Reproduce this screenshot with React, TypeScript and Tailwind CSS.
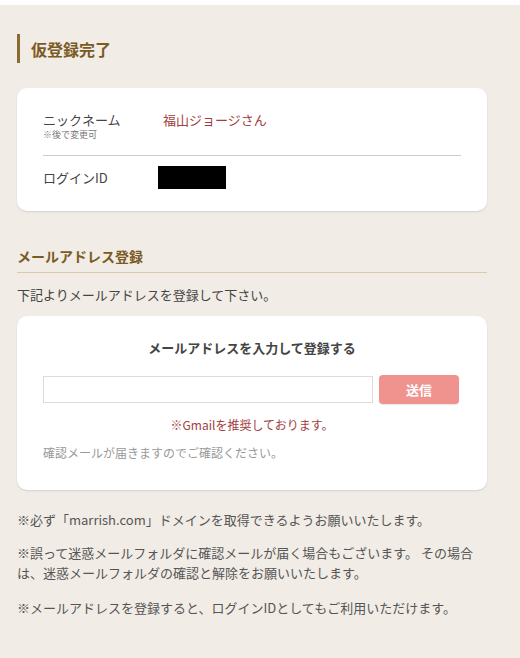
export default function App() {
  return (
    <div
      className="min-h-[658px] w-[520px] border-t-[5px] border-white bg-[#f1ece6] pb-10 text-[#333]"
      style={{ fontFamily: '"Noto Sans CJK JP", "Noto Sans", sans-serif' }}
    >
      <div className="ml-[17px] w-[470px]">
        {/* Page title */}
        <div className="mt-[29px] flex h-[29px] items-center border-l-[3px] border-[#8b6a33] pl-[11px]">
          <h1 className="text-[16px] leading-[20px] font-bold text-[#7b5b25]">仮登録完了</h1>
        </div>

        {/* Account card */}
        <div className="mt-[25px] rounded-[10px] bg-white px-[26px] pt-[23px] pb-[22px] shadow-[0_1px_2px_rgba(0,0,0,0.12)]">
          <div className="flex items-start">
            <div className="w-[120px]">
              <p className="text-[13px] leading-[18px] text-[#444]">ニックネーム</p>
              <p className="text-[9px] leading-[12px] text-[#777]">※後で変更可</p>
            </div>
            <p className="text-[13px] leading-[18px] text-[#a23d40]">福山ジョージさん</p>
          </div>
          <div className="mt-[14px] h-px bg-[#cccccc]" />
          <div className="mt-[10px] flex items-center">
            <p className="w-[115px] text-[13px] leading-[18px] text-[#444]">ログインID</p>
            <div className="h-[23px] w-[68px] bg-black" />
          </div>
        </div>

        {/* Mail section */}
        <h2 className="mt-[36px] border-b border-[#dccba4] pb-[7px] text-[14px] leading-[18px] font-bold text-[#7b5b25]">
          メールアドレス登録
        </h2>
        <p className="mt-[13px] text-[13px] leading-[18px] text-[#444]">下記よりメールアドレスを登録して下さい。</p>

        <div className="mt-[12px] rounded-[10px] bg-white px-[26px] pt-[23px] pb-[28px] shadow-[0_1px_2px_rgba(0,0,0,0.12)]">
          <p className="text-center text-[13px] leading-[18px] font-bold text-[#444]">メールアドレスを入力して登録する</p>
          <div className="mt-[18px] flex items-center gap-[6px]">
            <input
              type="text"
              className="h-[27px] w-[330px] border border-[#e2dbd0] bg-white px-2 text-[13px] outline-none"
            />
            <button className="h-[29px] w-[80px] rounded-[4px] bg-[#f0928e] text-[13px] font-bold text-white shadow-[0_1px_1px_rgba(0,0,0,0.1)]">
              送信
            </button>
          </div>
          <p className="mt-[12px] text-center text-[12px] leading-[17px] text-[#a23d40]">※Gmailを推奨しております。</p>
          <p className="mt-[11px] text-[12px] leading-[18px] text-[#999]">確認メールが届きますのでご確認ください。</p>
        </div>

        {/* Notes */}
        <div className="text-[13px] leading-[20px] text-[#555]">
          <p className="mt-[20px]">※必ず「marrish.com」ドメインを取得できるようお願いいたします。</p>
          <p className="mt-[13px]">
            ※誤って迷惑メールフォルダに確認メールが届く場合もございます。 その場合
            <br />
            は、迷惑メールフォルダの確認と解除をお願いいたします。
          </p>
          <p className="mt-[15px]">※メールアドレスを登録すると、ログインIDとしてもご利用いただけます。</p>
        </div>
      </div>
    </div>
  );
}
